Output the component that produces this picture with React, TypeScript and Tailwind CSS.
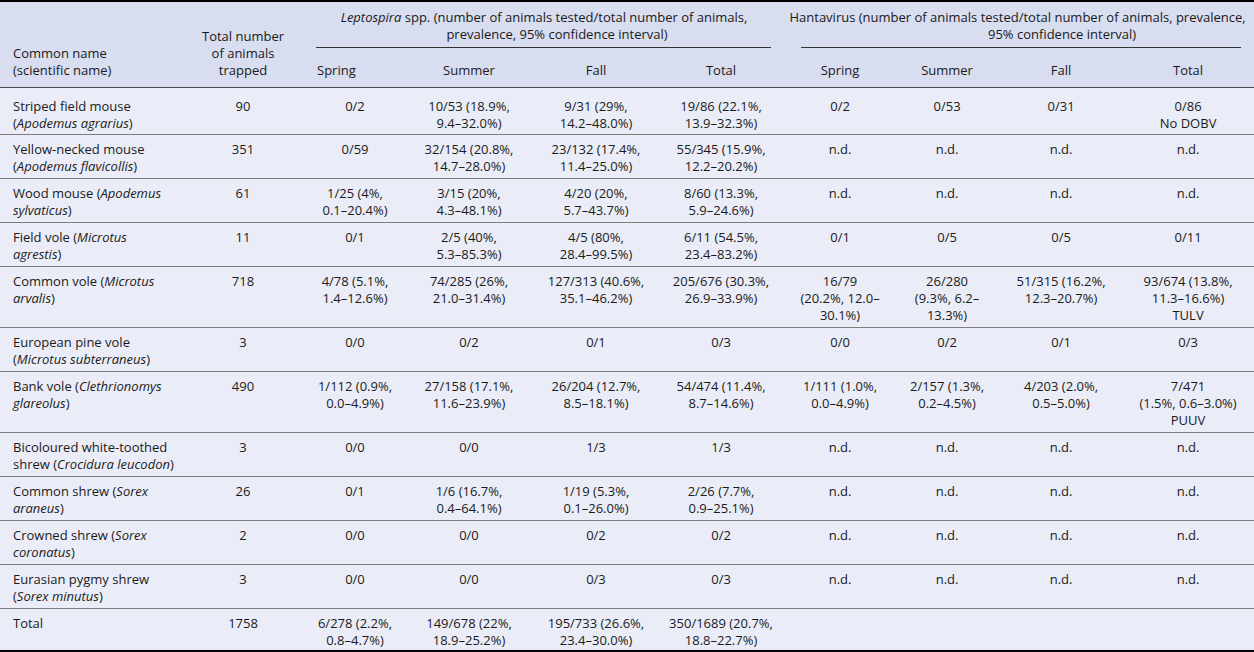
import React from "react"

type Row = {
  name: React.ReactNode
  total: string
  cells: string[]
  first?: boolean
  last?: boolean
}

const nd = ["n.d.", "n.d.", "n.d.", "n.d."]

const rows: Row[] = [
  {
    name: <>Striped field mouse<br />(<i>Apodemus agrarius</i>)</>,
    total: "90",
    cells: ["0/2", "10/53 (18.9%,\n9.4–32.0%)", "9/31 (29%,\n14.2–48.0%)", "19/86 (22.1%,\n13.9–32.3%)", "0/2", "0/53", "0/31", "0/86\nNo DOBV"],
    first: true,
  },
  {
    name: <>Yellow-necked mouse<br />(<i>Apodemus flavicollis</i>)</>,
    total: "351",
    cells: ["0/59", "32/154 (20.8%,\n14.7–28.0%)", "23/132 (17.4%,\n11.4–25.0%)", "55/345 (15.9%,\n12.2–20.2%)", ...nd],
  },
  {
    name: <>Wood mouse (<i>Apodemus</i><br /><i>sylvaticus</i>)</>,
    total: "61",
    cells: ["1/25 (4%,\n0.1–20.4%)", "3/15 (20%,\n4.3–48.1%)", "4/20 (20%,\n5.7–43.7%)", "8/60 (13.3%,\n5.9–24.6%)", ...nd],
  },
  {
    name: <>Field vole (<i>Microtus</i><br /><i>agrestis</i>)</>,
    total: "11",
    cells: ["0/1", "2/5 (40%,\n5.3–85.3%)", "4/5 (80%,\n28.4–99.5%)", "6/11 (54.5%,\n23.4–83.2%)", "0/1", "0/5", "0/5", "0/11"],
  },
  {
    name: <>Common vole (<i>Microtus</i><br /><i>arvalis</i>)</>,
    total: "718",
    cells: [
      "4/78 (5.1%,\n1.4–12.6%)",
      "74/285 (26%,\n21.0–31.4%)",
      "127/313 (40.6%,\n35.1–46.2%)",
      "205/676 (30.3%,\n26.9–33.9%)",
      "16/79\n(20.2%, 12.0–\n30.1%)",
      "26/280\n(9.3%, 6.2–\n13.3%)",
      "51/315 (16.2%,\n12.3–20.7%)",
      "93/674 (13.8%,\n11.3–16.6%)\nTULV",
    ],
  },
  {
    name: <>European pine vole<br />(<i>Microtus subterraneus</i>)</>,
    total: "3",
    cells: ["0/0", "0/2", "0/1", "0/3", "0/0", "0/2", "0/1", "0/3"],
  },
  {
    name: <>Bank vole (<i>Clethrionomys</i><br /><i>glareolus</i>)</>,
    total: "490",
    cells: [
      "1/112 (0.9%,\n0.0–4.9%)",
      "27/158 (17.1%,\n11.6–23.9%)",
      "26/204 (12.7%,\n8.5–18.1%)",
      "54/474 (11.4%,\n8.7–14.6%)",
      "1/111 (1.0%,\n0.0–4.9%)",
      "2/157 (1.3%,\n0.2–4.5%)",
      "4/203 (2.0%,\n0.5–5.0%)",
      "7/471\n(1.5%, 0.6–3.0%)\nPUUV",
    ],
  },
  {
    name: <>Bicoloured white-toothed<br />shrew (<i>Crocidura leucodon</i>)</>,
    total: "3",
    cells: ["0/0", "0/0", "1/3", "1/3", ...nd],
  },
  {
    name: <>Common shrew (<i>Sorex</i><br /><i>araneus</i>)</>,
    total: "26",
    cells: ["0/1", "1/6 (16.7%,\n0.4–64.1%)", "1/19 (5.3%,\n0.1–26.0%)", "2/26 (7.7%,\n0.9–25.1%)", ...nd],
  },
  {
    name: <>Crowned shrew (<i>Sorex</i><br /><i>coronatus</i>)</>,
    total: "2",
    cells: ["0/0", "0/0", "0/2", "0/2", ...nd],
  },
  {
    name: <>Eurasian pygmy shrew<br />(<i>Sorex minutus</i>)</>,
    total: "3",
    cells: ["0/0", "0/0", "0/3", "0/3", ...nd],
  },
  {
    name: "Total",
    total: "1758",
    cells: ["6/278 (2.2%,\n0.8–4.7%)", "149/678 (22%,\n18.9–25.2%)", "195/733 (26.6%,\n23.4–30.0%)", "350/1689 (20.7%,\n18.8–22.7%)", "", "", "", ""],
    last: true,
  },
]

export default function App() {
  return (
    <div className="w-[1254px] bg-[#eaedf7] font-['Open_Sans','Noto_Sans',sans-serif] text-[13px] leading-[17px] text-[#1a1a1a]">
      <table className="w-full table-fixed border-collapse">
        <colgroup>
          <col className="w-[178px]" />
          <col className="w-[130px]" />
          <col className="w-[94px]" />
          <col className="w-[134px]" />
          <col className="w-[120px]" />
          <col className="w-[130px]" />
          <col className="w-[108px]" />
          <col className="w-[106px]" />
          <col className="w-[122px]" />
          <col className="w-[132px]" />
        </colgroup>
        <thead className="bg-[#d8ddef]">
          <tr className="border-t-2 border-black">
            <th rowSpan={2} className="border-b border-[#4a4a4a] pb-[8px] pl-[13px] text-left align-bottom font-normal">
              Common name
              <br />
              (scientific name)
            </th>
            <th rowSpan={2} className="border-b border-[#4a4a4a] pb-[8px] text-center align-bottom font-normal">
              Total number
              <br />
              of animals
              <br />
              trapped
            </th>
            <th colSpan={4} className="pt-[7px] text-center align-top font-normal">
              <div className="pr-[6px]">
                <i>Leptospira</i> spp. (number of animals tested/total number of animals,
              </div>
              <div className="pl-[20px]">prevalence, 95% confidence interval)</div>
              <div className="mt-[4px] ml-[8px] mr-[15px] border-b border-[#333]" />
            </th>
            <th colSpan={4} className="pt-[7px] text-center align-top font-normal">
              <div className="pr-[5px] whitespace-nowrap">
                Hantavirus (number of animals tested/total number of animals, prevalence,
              </div>
              <div className="pl-[84px]">95% confidence interval)</div>
              <div className="mt-[4px] ml-[15px] mr-[13px] border-b border-[#333]" />
            </th>
          </tr>
          <tr className="border-b border-[#4a4a4a]">
            <th className="pt-[14px] pb-[8px] pl-[9px] text-left font-normal">Spring</th>
            <th className="pt-[14px] pb-[8px] text-center font-normal">Summer</th>
            <th className="pt-[14px] pb-[8px] text-center font-normal">Fall</th>
            <th className="pt-[14px] pb-[8px] text-center font-normal">Total</th>
            <th className="pt-[14px] pb-[8px] text-center font-normal">Spring</th>
            <th className="pt-[14px] pb-[8px] text-center font-normal">Summer</th>
            <th className="pt-[14px] pb-[8px] text-center font-normal">Fall</th>
            <th className="pt-[14px] pb-[8px] text-center font-normal">Total</th>
          </tr>
        </thead>
        <tbody>
          {rows.map((r, i) => {
            const pad = r.first ? "pt-[10px] pb-[2px]" : r.last ? "pt-[6px] pb-[1px]" : "pt-[6px] pb-[3px]"
            return (
              <tr key={i} className={r.last ? "border-b-2 border-black" : "border-b border-[#7d7d7d]"}>
                <td className={`${pad} pl-[13px] text-left align-top`}>{r.name}</td>
                <td className={`${pad} text-center align-top`}>{r.total}</td>
                {r.cells.map((c, j) => (
                  <td key={j} className={`${pad} whitespace-pre-line text-center align-top`}>
                    {c}
                  </td>
                ))}
              </tr>
            )
          })}
        </tbody>
      </table>
    </div>
  )
}
